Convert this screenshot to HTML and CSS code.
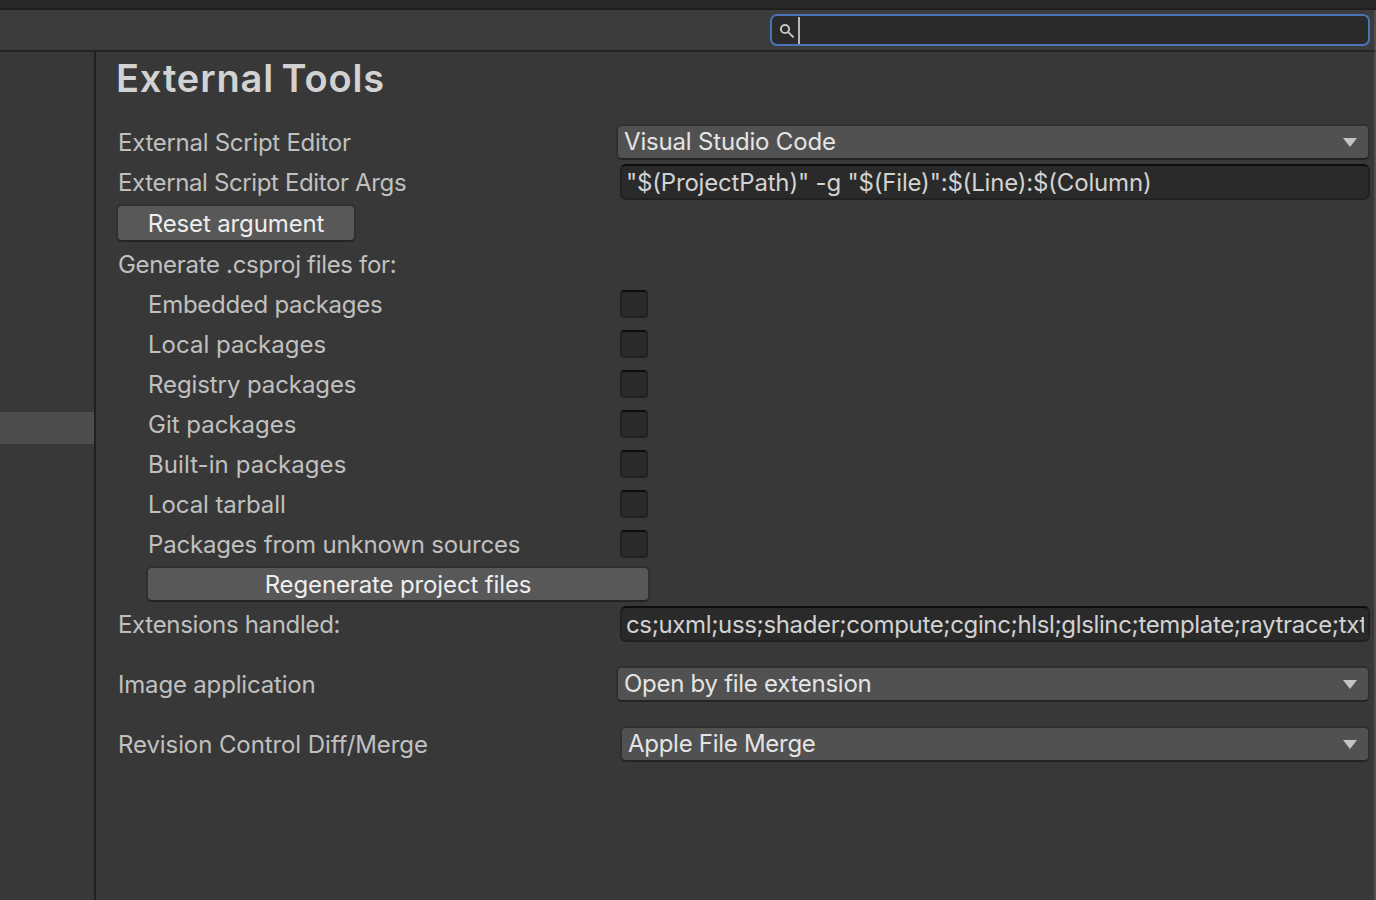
FILE: index.html
```html
<!DOCTYPE html>
<html lang="en">
<head>
<meta charset="utf-8">
<title>Preferences</title>
<link rel="stylesheet" href="styles.css">
</head>
<body>
<div class="window">
  <div class="titlebar"></div>
  <header class="toolbar">
    <div class="search">
      <svg class="search-icon" width="16" height="16" viewBox="0 0 16 16"><circle cx="6" cy="7" r="4.1"/><path d="M8.9 9.9 14.6 15.4"/></svg>
      <span class="caret"></span>
    </div>
  </header>
  <div class="body">
    <nav class="sidebar"><div class="selected"></div></nav>
    <main class="content">
      <h1 class="title"><span>External Tools</span></h1>
      <div class="row"><span class="label tight-4">External Script Editor</span><div class="dropdown"><span class="tight-2">Visual Studio Code</span><svg class="arrow" width="14" height="9" viewBox="0 0 14 9"><path d="M0 0h14L7 9z"/></svg></div></div>
      <div class="row"><span class="label tight-6">External Script Editor Args</span><div class="field"><span class="tight-2">"$(ProjectPath)" -g "$(File)":$(Line):$(Column)</span></div></div>
      <button class="button reset"><span class="tight-1">Reset argument</span></button>
      <div class="row heading"><span class="label tight-5">Generate .csproj files for:</span></div>
      <div class="checks">
        <div class="check-row"><span class="label tight-4">Embedded packages</span><i class="check"></i></div>
        <div class="check-row"><span class="label">Local packages</span><i class="check"></i></div>
        <div class="check-row"><span class="label tight-0">Registry packages</span><i class="check"></i></div>
        <div class="check-row"><span class="label">Git packages</span><i class="check"></i></div>
        <div class="check-row"><span class="label loose">Built-in packages</span><i class="check"></i></div>
        <div class="check-row"><span class="label tight-0">Local tarball</span><i class="check"></i></div>
        <div class="check-row"><span class="label tight-2">Packages from unknown sources</span><i class="check"></i></div>
      </div>
      <button class="button regenerate"><span class="tight-1">Regenerate project files</span></button>
      <div class="row"><span class="label tight-5">Extensions handled:</span><div class="field"><span class="clip">cs;uxml;uss;shader;compute;cginc;hlsl;glslinc;template;raytrace;txt</span></div></div>
      <div class="row spaced"><span class="label tight-2">Image application</span><div class="dropdown"><span class="tight-4">Open by file extension</span><svg class="arrow" width="14" height="9" viewBox="0 0 14 9"><path d="M0 0h14L7 9z"/></svg></div></div>
      <div class="row spaced"><span class="label tight-0">Revision Control Diff/Merge</span><div class="dropdown inset"><span class="tight-4">Apple File Merge</span><svg class="arrow" width="14" height="9" viewBox="0 0 14 9"><path d="M0 0h14L7 9z"/></svg></div></div>
    </main>
    <div class="edge"></div>
  </div>
</div>
</body>
</html>
```
FILE: styles.css
```css
* { box-sizing: border-box; }
body {
  margin: 0;
  background: #383838;
  color: #c0c0c0;
  font: 24px/36px Inter, sans-serif;
}
.window { display: flex; flex-direction: column; height: 900px; overflow: hidden; }
.titlebar { height: 10px; background: #282828; border-bottom: 2px solid #202020; }
.toolbar {
  display: flex;
  justify-content: flex-end;
  height: 42px;
  padding: 4px 4px 0 0;
  background: #3c3c3c;
  border-bottom: 2px solid #232323;
  border-right: 2px solid #505050;
}
.search {
  display: flex;
  align-items: center;
  width: 600px;
  height: 32px;
  padding-left: 7px;
  background: #2a2a2a;
  border: 2px solid #4775b8;
  border-radius: 7px;
}
.search-icon { fill: none; stroke: #c4c4c4; stroke-width: 2; }
.caret { width: 2px; height: 27px; margin-left: 3px; background: #b8b8b8; }
.body { display: flex; flex: 1; }
.sidebar { width: 96px; padding-top: 360px; border-right: 2px solid #202020; }
.selected { height: 32px; background: #4d4d4d; }
.content { flex: 1; min-width: 0; padding-left: 20px; }
.edge { width: 2px; background: #505050; }
.title {
  height: 72px;
  margin: 0;
  padding-top: 2px;
  color: #d2d2d2;
  font-size: 38px;
  font-weight: 600;
  line-height: 48px;
  letter-spacing: 0.85px;
  word-spacing: -3px;
}
.row { display: flex; align-items: center; height: 36px; margin-bottom: 4px; padding-right: 4px; }
.label { width: 504px; flex: none; padding: 2px 0 0 2px; line-height: 36px; white-space: nowrap; }
.dropdown, .field, .button { border: 2px solid #303030; border-radius: 6px; }
.dropdown {
  display: flex;
  flex: 1;
  align-items: center;
  justify-content: space-between;
  height: 36px;
  margin-left: -4px;
  padding: 0 11px 0 6px;
  background: #515151;
  border-bottom-color: #242424;
  color: #e4e4e4;
  line-height: 32px;
}
.dropdown.inset { margin-left: 0; }
.arrow { fill: #c4c4c4; }
.field {
  flex: 1;
  min-width: 0;
  height: 36px;
  padding: 0 4px;
  background: #2a2a2a;
  border-color: #0d0d0d #212121 #212121;
  color: #d2d2d2;
  line-height: 33px;
  white-space: nowrap;
}
.clip { display: block; overflow: hidden; letter-spacing: -0.36px; }
.button {
  display: block;
  padding: 1px 0 0;
  background: #585858;
  border-bottom-color: #242424;
  color: #eee;
  font: inherit;
  line-height: 32px;
  text-align: center;
}
.reset { width: 240px; height: 38px; line-height: 34px; }
.heading { margin: 4px 0 2px; }
.checks { padding-left: 30px; }
.check-row { display: flex; align-items: center; height: 40px; }
.check-row .label { width: 474px; }
.check {
  width: 28px;
  height: 28px;
  background: #2a2a2a;
  border: 2px solid #212121;
  border-top-color: #0d0d0d;
  border-radius: 4px;
}
.regenerate { width: 504px; height: 36px; margin: 2px 0 4px 30px; }
.spaced { margin: 24px 0; }

/* tracking adjustments */
.loose { letter-spacing: 0.07px; }
.tight-0 { letter-spacing: -0.09px; }
.tight-1 { letter-spacing: -0.13px; }
.tight-2 { letter-spacing: -0.18px; }
.tight-4 { letter-spacing: -0.28px; }
.tight-5 { letter-spacing: -0.32px; }
.tight-6 { letter-spacing: -0.37px; }
```
